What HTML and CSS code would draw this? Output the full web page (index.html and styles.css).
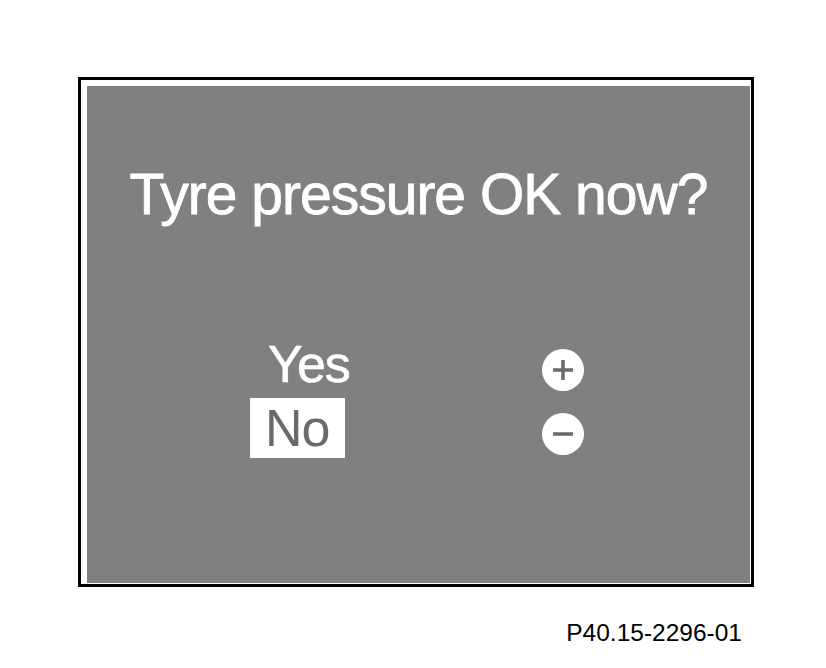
FILE: index.html
```html
<!DOCTYPE html>
<html>
<head>
    <title>Tyre pressure</title>
    <link rel="stylesheet" href="styles.css">
</head>
<body>
    <div class="page">
        <div class="frame">
            <div class="screen">
                <h1 class="question">Tyre pressure OK now?</h1>
                <div class="options">
                    <div class="option">
                        <span class="label yes">Yes</span>
                        <svg class="key" viewBox="0 0 42 42" width="42" height="42">
                            <circle cx="21" cy="21" r="21" fill="#fff"/>
                            <path d="M11 21 H31 M21 11 V31" stroke="#6a6a6a" stroke-width="3.5"/>
                        </svg>
                    </div>
                    <div class="option">
                        <span class="label no">No</span>
                        <svg class="key" viewBox="0 0 42 42" width="42" height="42">
                            <circle cx="21" cy="21" r="21" fill="#fff"/>
                            <path d="M11 21 H31" stroke="#6a6a6a" stroke-width="3.5"/>
                        </svg>
                    </div>
                </div>
            </div>
        </div>
        <div class="caption">P40.15-2296-01</div>
    </div>
</body>
</html>
```
FILE: styles.css
```css
body {
    margin: 0;
    background: #fff;
    font-family: "Liberation Sans", Arial, sans-serif;
}
.page {
    width: 676px;
    padding: 77px 0 0 78px;
}
.frame {
    border: 3px solid #000;
    padding: 6px 1px 1px 6px;
}
.screen {
    background: #808080;
    height: 497px;
    padding-top: 80px;
    box-sizing: border-box;
}
.question {
    margin: 0;
    color: #fff;
    font-weight: normal;
    font-size: 57px;
    line-height: 57px;
    letter-spacing: -1px;
    text-align: center;
    -webkit-text-stroke: 0.8px #fff;
}
.options {
    margin: 111px 0 0 163px;
    display: flex;
    flex-direction: column;
    gap: 4px;
}
.option {
    display: flex;
    align-items: flex-start;
    height: 60px;
}
.label {
    width: 95px;
    box-sizing: border-box;
    font-size: 52px;
    line-height: 60px;
    letter-spacing: -1px;
    margin-right: 197px;
}
.yes {
    color: #fff;
    padding-left: 18px;
    -webkit-text-stroke: 0.6px #fff;
}
.no {
    background: #fff;
    color: #6a6a6a;
    padding-left: 15px;
}
.key {
    margin-top: 15px;
}
.caption {
    margin-top: 34px;
    padding-right: 12px;
    text-align: right;
    font-size: 24.5px;
    line-height: 24px;
    color: #000;
}
```
